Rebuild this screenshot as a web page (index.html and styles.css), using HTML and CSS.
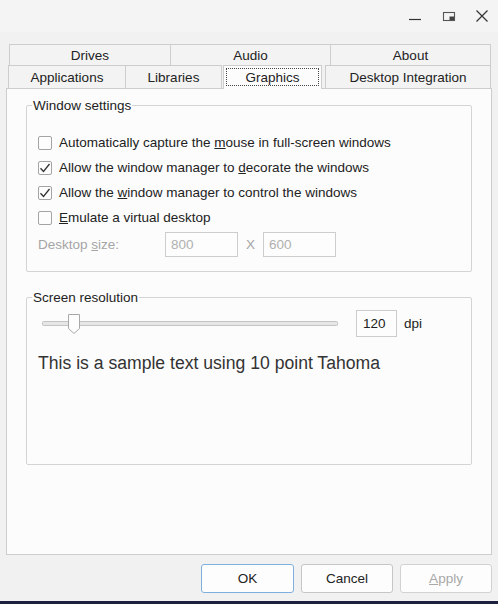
FILE: index.html
```html
<!DOCTYPE html>
<html>
<head>
    <link rel="stylesheet" href="styles.css">
</head>
<body>
    <div class="window">
        <div class="titlebar">
            <span class="tb-btn">
                <svg width="14" height="14" viewBox="0 0 14 14"><path d="M1 10.5 H13" stroke="#333" stroke-width="1.2"/></svg>
            </span>
            <span class="tb-btn">
                <svg width="14" height="14" viewBox="0 0 14 14"><rect x="1.5" y="3.5" width="11" height="8" fill="none" stroke="#555" stroke-width="1.1"/><rect x="7.5" y="7.5" width="4.5" height="3.5" fill="#444"/></svg>
            </span>
            <span class="tb-btn last">
                <svg width="14" height="14" viewBox="0 0 14 14"><path d="M1.5 1.5 L12.5 12.5 M12.5 1.5 L1.5 12.5" stroke="#333" stroke-width="1.2"/></svg>
            </span>
        </div>

        <div class="tabs">
            <div class="tab-row top">
                <div class="tab w-drives">Drives</div>
                <div class="tab w-audio">Audio</div>
                <div class="tab w-about">About</div>
            </div>
            <div class="tab-row bottom">
                <div class="tab w-apps">Applications</div>
                <div class="tab w-libs">Libraries</div>
                <div class="tab w-graphics selected"><span class="focus">Graphics</span></div>
                <div class="tab w-desktop">Desktop Integration</div>
            </div>
        </div>

        <div class="panel">
            <fieldset class="group window-settings">
                <legend>Window settings</legend>
                <label class="check-row">
                    <span class="checkbox"></span>
                    <span>Automatically capture the <u>m</u>ouse in full-screen windows</span>
                </label>
                <label class="check-row">
                    <span class="checkbox"><svg width="12" height="12" viewBox="0 0 12 12"><path d="M1.5 6.2 L4.5 9.5 L10.5 2" fill="none" stroke="#333" stroke-width="1.3"/></svg></span>
                    <span>Allow the window manager to <u>d</u>ecorate the windows</span>
                </label>
                <label class="check-row">
                    <span class="checkbox"><svg width="12" height="12" viewBox="0 0 12 12"><path d="M1.5 6.2 L4.5 9.5 L10.5 2" fill="none" stroke="#333" stroke-width="1.3"/></svg></span>
                    <span>Allow the <u>w</u>indow manager to control the windows</span>
                </label>
                <label class="check-row">
                    <span class="checkbox"></span>
                    <span><u>E</u>mulate a virtual desktop</span>
                </label>
                <div class="desktop-row">
                    <span class="desktop-label">Desktop <u>s</u>ize:</span>
                    <span class="field disabled">800</span>
                    <span class="times">X</span>
                    <span class="field disabled">600</span>
                </div>
            </fieldset>

            <fieldset class="group screen-res">
                <legend>Screen resolution</legend>
                <div class="dpi-row">
                    <svg class="slider" width="296" height="22" viewBox="0 0 296 22">
                        <rect x="0.5" y="8.5" width="295" height="4" rx="1" fill="#e6e6e6" stroke="#c4c4c4"/>
                        <path d="M26.5 1.5 H37.5 V15.5 L32 20.5 L26.5 15.5 Z" fill="#fdfdfd" stroke="#a8a8a8"/>
                    </svg>
                    <span class="field dpi-field">120</span>
                    <span class="dpi-unit">dpi</span>
                </div>
                <div class="sample">This is a sample text using 10 point Tahoma</div>
            </fieldset>
        </div>

        <div class="buttons">
            <button class="btn default">OK</button>
            <button class="btn">Cancel</button>
            <button class="btn disabled"><u>A</u>pply</button>
        </div>

        <div class="taskbar-edge"></div>
    </div>
</body>
</html>
```

FILE: styles.css
```css
body {
    margin: 0;
    background-color: #f0f0f0;
    font-family: "Liberation Sans", Arial, sans-serif;
    font-size: 13.5px;
    color: #222;
}

.window {
    width: 498px;
    height: 604px;
    display: flex;
    flex-direction: column;
    background-color: #f1f1f1;
}

/* title bar */
.titlebar {
    height: 32px;
    display: flex;
    justify-content: flex-end;
    align-items: center;
    background-color: #f4f4f4;
}

.tb-btn {
    width: 34px;
    height: 32px;
    display: flex;
    align-items: center;
    justify-content: center;
}

.tb-btn.last {
    width: 32px;
}

/* tab strip */
.tabs {
    margin-top: 12px;
}

.tab-row {
    display: flex;
}

.tab-row.top {
    padding-left: 9px;
    height: 21px;
}

.tab-row.bottom {
    padding-left: 8px;
    height: 23px;
    align-items: flex-end;
}

.tab {
    box-sizing: border-box;
    border: 1px solid #cdcdcd;
    border-bottom: none;
    background-color: #f3f3f3;
    display: flex;
    align-items: center;
    justify-content: center;
    height: 100%;
    line-height: 15px;
}

.tab + .tab {
    margin-left: -1px;
}

.w-drives { width: 162px; }
.w-audio { width: 161px; }
.w-about { width: 161px; }
.w-apps { width: 118px; }
.w-libs { width: 97px; }
.w-desktop { width: 166px; }

.tab.w-graphics {
    width: 99px;
    margin-left: 1px;
}

.tab.w-desktop {
    margin-left: 3px;
}

.tab.selected {
    background-color: #fcfcfc;
    height: 24px;
    margin-bottom: -1px;
    position: relative;
    z-index: 1;
    padding: 2px 2px 3px;
}

.focus {
    width: 100%;
    height: 100%;
    box-sizing: border-box;
    border: 1px dotted #444;
    display: flex;
    align-items: center;
    justify-content: center;
}

/* tab page */
.panel {
    box-sizing: border-box;
    height: 467px;
    margin: 0 6px;
    border: 1px solid #cdcdcd;
    background-color: #fcfcfc;
    padding: 9px 19px 0;
}

.group {
    margin: 0;
    border: 1px solid #d4d4d4;
    border-radius: 2px;
    padding: 0 11px;
    min-width: 0;
}

.group legend {
    padding: 0 1px;
    margin-left: -6px;
    line-height: 15px;
}

.window-settings {
    padding-top: 17px;
    padding-bottom: 14px;
}

.check-row {
    height: 25px;
    display: flex;
    align-items: center;
    gap: 7px;
}

.checkbox {
    box-sizing: border-box;
    width: 14px;
    height: 14px;
    border: 1px solid #a4a4a4;
    border-radius: 2px;
    background-color: #fdfdfd;
    display: flex;
    align-items: center;
    justify-content: center;
}

.desktop-row {
    margin-top: 2px;
    display: flex;
    align-items: center;
    color: #a5a5a5;
}

.desktop-label {
    width: 127px;
}

.field {
    box-sizing: border-box;
    width: 73px;
    height: 25px;
    border: 1px solid #cdcdcd;
    background-color: #fdfdfd;
    padding-left: 5px;
    display: flex;
    align-items: center;
}

.field.disabled {
    color: #b0b0b0;
}

.times {
    width: 25px;
    text-align: center;
}

.screen-res {
    margin-top: 18px;
    box-sizing: border-box;
    height: 175px;
    padding-top: 5px;
}

.dpi-row {
    display: flex;
    align-items: center;
    height: 27px;
}

.slider {
    margin-left: 4px;
    margin-right: 18px;
}

.dpi-field {
    width: 41px;
    height: 27px;
    padding-left: 6px;
    color: #222;
}

.dpi-unit {
    margin-left: 7px;
}

.sample {
    margin-top: 16px;
    font-size: 17.6px;
    line-height: 20px;
    color: #333;
}

/* dialog buttons */
.buttons {
    display: flex;
    justify-content: flex-end;
    gap: 7px;
    padding-right: 6px;
    margin-top: 9px;
}

.btn {
    box-sizing: border-box;
    width: 92px;
    height: 29px;
    border: 1px solid #c6c6c6;
    border-radius: 3px;
    background-color: #fdfdfd;
    font-family: "Liberation Sans", Arial, sans-serif;
    font-size: 13.5px;
    color: #222;
    padding: 0;
}

.btn.default {
    width: 93px;
    border-color: #7fb0dd;
}

.btn.disabled {
    color: #a8a8a8;
    border-color: #d2d2d2;
}

.taskbar-edge {
    margin-top: auto;
    height: 3px;
    background-color: #1c1f3d;
}
```
